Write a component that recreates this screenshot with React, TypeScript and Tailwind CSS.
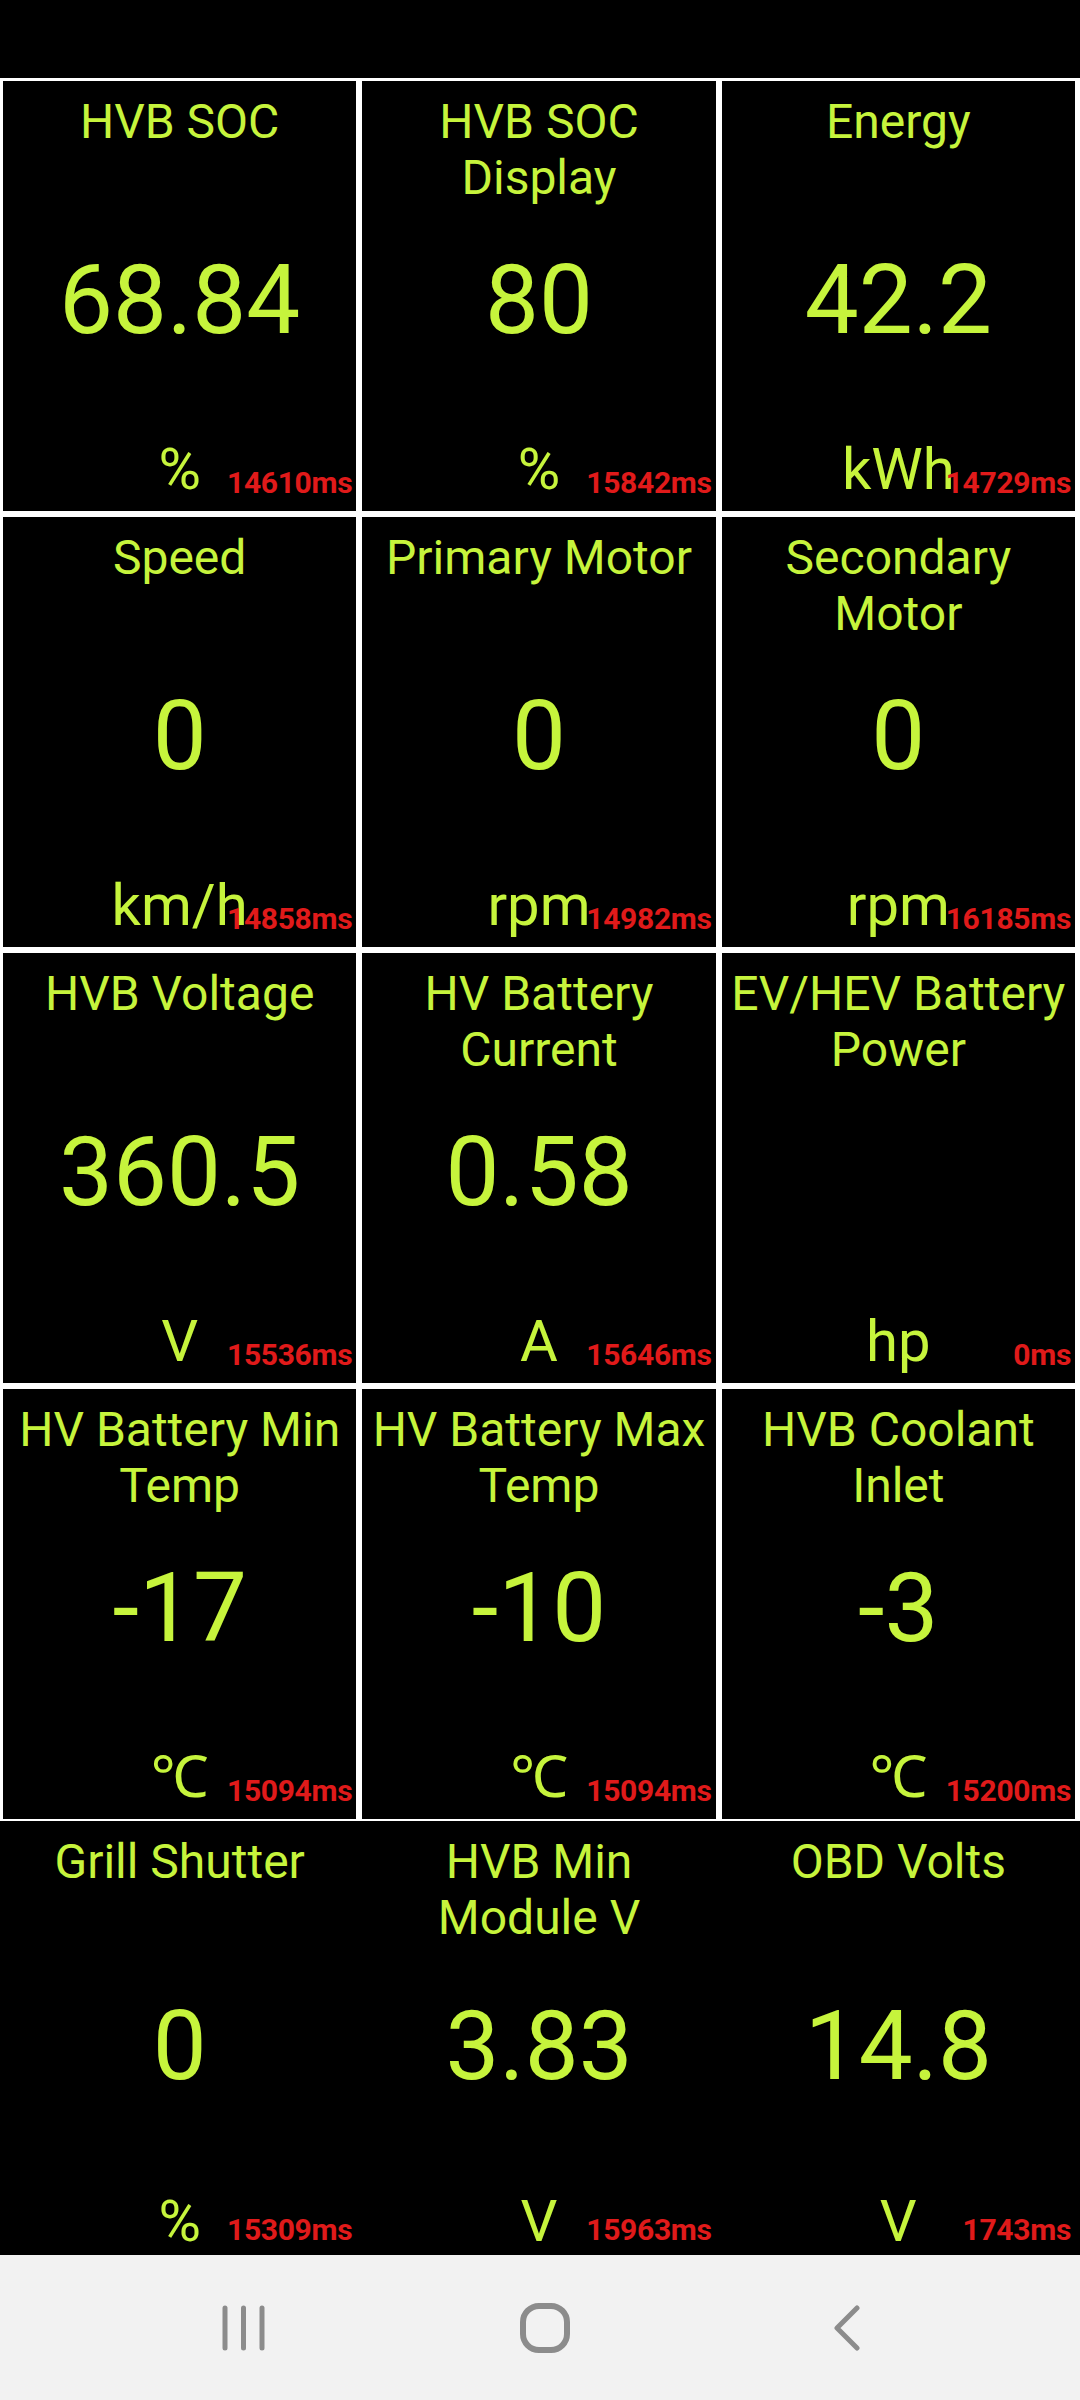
import React from "react";

type Item = { title: string; value: string; unit: string; ms: string };

const rows: Item[][] = [
  [
    { title: "HVB SOC", value: "68.84", unit: "%", ms: "14610ms" },
    { title: "HVB SOC Display", value: "80", unit: "%", ms: "15842ms" },
    { title: "Energy", value: "42.2", unit: "kWh", ms: "14729ms" },
  ],
  [
    { title: "Speed", value: "0", unit: "km/h", ms: "14858ms" },
    { title: "Primary Motor", value: "0", unit: "rpm", ms: "14982ms" },
    { title: "Secondary Motor", value: "0", unit: "rpm", ms: "16185ms" },
  ],
  [
    { title: "HVB Voltage", value: "360.5", unit: "V", ms: "15536ms" },
    { title: "HV Battery Current", value: "0.58", unit: "A", ms: "15646ms" },
    { title: "EV/HEV Battery Power", value: "", unit: "hp", ms: "0ms" },
  ],
  [
    { title: "HV Battery Min Temp", value: "-17", unit: "℃", ms: "15094ms" },
    { title: "HV Battery Max Temp", value: "-10", unit: "℃", ms: "15094ms" },
    { title: "HVB Coolant Inlet", value: "-3", unit: "℃", ms: "15200ms" },
  ],
];

const lastRow: Item[] = [
  { title: "Grill Shutter", value: "0", unit: "%", ms: "15309ms" },
  { title: "HVB Min Module V", value: "3.83", unit: "V", ms: "15963ms" },
  { title: "OBD Volts", value: "14.8", unit: "V", ms: "1743ms" },
];

function Cell({ item, last }: { item: Item; last?: boolean }) {
  return (
    <div className="relative grid h-full overflow-hidden bg-black text-[#c6f43c]">
      <div className="[grid-area:1/1] self-start px-2 pt-[13px] text-center text-[48px] leading-[56px]">
        {item.title}
      </div>
      <div
        className={
          last
            ? "[grid-area:1/1] self-center pt-[16px] text-center text-[96px] leading-none"
            : "[grid-area:1/1] self-center pt-[8px] text-center text-[96px] leading-none"
        }
      >
        {item.value}
      </div>
      <div
        className={
          last
            ? "[grid-area:1/1] self-end pb-0 text-center text-[58px] leading-[68px]"
            : "[grid-area:1/1] self-end pb-[8px] text-center text-[58px] leading-[68px]"
        }
      >
        {item.unit}
      </div>
      <div
        className={
          last
            ? "absolute bottom-[8px] right-[4px] text-[30px] font-bold leading-[35px] tracking-[-0.3px] text-[#e01a1a]"
            : "absolute bottom-[11px] right-[4px] text-[30px] font-bold leading-[35px] tracking-[-0.3px] text-[#e01a1a]"
        }
      >
        {item.ms}
      </div>
    </div>
  );
}

export default function App() {
  return (
    <div
      className="flex h-[2400px] w-[1080px] flex-col overflow-hidden bg-black"
      style={{ fontFamily: "Roboto, 'Noto Sans', 'Noto Sans CJK SC', sans-serif" }}
    >
      <div className="h-[78px] shrink-0 bg-black" />
      <div className="flex shrink-0 flex-col gap-[6px] bg-white pb-[2px] pl-[3px] pr-[5px] pt-[3px]">
        {rows.map((row, i) => (
          <div key={i} className="grid h-[430px] grid-cols-3 gap-[6px]">
            {row.map((item, j) => (
              <Cell key={j} item={item} />
            ))}
          </div>
        ))}
      </div>
      <div className="grid h-[434px] shrink-0 grid-cols-3 gap-[6px] bg-black pl-[3px] pr-[5px]">
        {lastRow.map((item, j) => (
          <Cell key={j} item={item} last />
        ))}
      </div>
      <div className="flex h-[145px] shrink-0 items-center bg-[#f2f2f2] pl-[222px]">
        <svg width="43" height="46" viewBox="0 0 43 46" fill="none" stroke="#8c8c8c" strokeWidth="5" strokeLinecap="round">
          <line x1="3" y1="3" x2="3" y2="43" />
          <line x1="21.5" y1="3" x2="21.5" y2="43" />
          <line x1="40" y1="3" x2="40" y2="43" />
        </svg>
        <svg className="ml-[255px]" width="50" height="50" viewBox="0 0 50 50" fill="none" stroke="#8c8c8c" strokeWidth="6">
          <rect x="3" y="3" width="44" height="44" rx="16" />
        </svg>
        <svg className="ml-[263px]" width="28" height="46" viewBox="0 0 28 46" fill="none" stroke="#8c8c8c" strokeWidth="5" strokeLinecap="round" strokeLinejoin="round">
          <polyline points="24,3 4,23 24,43" />
        </svg>
      </div>
    </div>
  );
}
